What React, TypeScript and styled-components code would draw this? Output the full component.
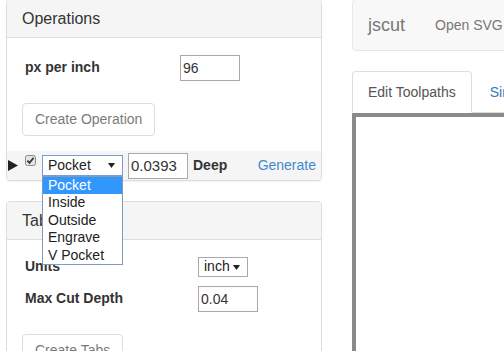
import styled, { createGlobalStyle } from 'styled-components'

const GlobalStyle = createGlobalStyle`
  html, body {
    margin: 0;
    padding: 0;
    background: #fff;
    overflow: hidden;
  }
  body {
    font-family: 'Liberation Sans', Arial, sans-serif;
    font-size: 14px;
    line-height: 1.42857;
    color: #333;
  }
  * {
    box-sizing: border-box;
  }
`

const OPERATION_TYPES = ['Pocket', 'Inside', 'Outside', 'Engrave', 'V Pocket']

export default function App() {
  return (
    <>
      <GlobalStyle />
      <Page>
        <LeftColumn>
          <Panel>
            <PanelHeading>Operations</PanelHeading>
            <PanelBody>
              <FieldRow $labelWidth={158} $offset={2}>
                <FieldLabel>px per inch</FieldLabel>
                <TextInput $width={60} defaultValue="96" />
              </FieldRow>
              <ActionRow>
                <Button disabled>Create Operation</Button>
              </ActionRow>
            </PanelBody>
            <OperationRow>
              <Expander width="10" height="11" viewBox="0 0 10 11">
                <path d="M0 0 L10 5.5 L0 11 Z" fill="#222" />
              </Expander>
              <CheckMark width="11" height="11" viewBox="0 0 11 11">
                <rect x="0.5" y="0.5" width="10" height="10" rx="2" fill="#e4e4e4" stroke="#8a8a8a" />
                <path d="M2.4 5.6 L4.5 7.9 L8.6 2.8" stroke="#333" strokeWidth="1.7" fill="none" />
              </CheckMark>
              <SelectWrap>
                <FakeSelect $width={81} $height={21} $focused>
                  <span>Pocket</span>
                  <SelectArrow />
                </FakeSelect>
                <OptionList>
                  {OPERATION_TYPES.map((name, i) => (
                    <OptionItem key={name} $selected={i === 0}>
                      {name}
                    </OptionItem>
                  ))}
                </OptionList>
              </SelectWrap>
              <TextInput $width={60} $fontSize={15} defaultValue="0.0393" />
              <DeepLabel>Deep</DeepLabel>
              <GenerateLink href="#">Generate</GenerateLink>
            </OperationRow>
          </Panel>

          <Panel>
            <PanelHeading>Tabs</PanelHeading>
            <PanelBody>
              <FieldRow $labelWidth={176} $offset={2}>
                <FieldLabel>Units</FieldLabel>
                <FakeSelect $width={50} $height={20}>
                  <span>inch</span>
                  <SelectArrow />
                </FakeSelect>
              </FieldRow>
              <FieldRow $labelWidth={176} $offset={9}>
                <FieldLabel>Max Cut Depth</FieldLabel>
                <TextInput $width={60} defaultValue="0.04" />
              </FieldRow>
              <ActionRow>
                <Button disabled>Create Tabs</Button>
              </ActionRow>
            </PanelBody>
          </Panel>
        </LeftColumn>

        <RightColumn>
          <Navbar>
            <Brand>jscut</Brand>
            <NavLink>Open SVG</NavLink>
            <NavLink>Save Gcode</NavLink>
          </Navbar>
          <TabList>
            <Tab $active>Edit Toolpaths</Tab>
            <Tab>Simulate GCODE</Tab>
          </TabList>
          <Canvas />
        </RightColumn>
      </Page>
    </>
  )
}

function SelectArrow() {
  return (
    <svg width="7" height="5" viewBox="0 0 7 5">
      <path d="M0 0 L7 0 L3.5 5 Z" fill="#222" />
    </svg>
  )
}

const Page = styled.div`
  display: flex;
  align-items: flex-start;
  gap: 30px;
  width: 504px;
  height: 352px;
  margin-top: -1px;
  padding-left: 6px;
  overflow: hidden;
`

const LeftColumn = styled.div`
  flex: none;
  width: 316px;
`

const RightColumn = styled.div`
  flex: none;
  width: 640px;
`

const Panel = styled.div`
  margin-bottom: 20px;
  background: #fff;
  border: 1px solid #ddd;
  border-radius: 4px;
  box-shadow: 0 1px 1px rgba(0, 0, 0, 0.05);
`

const PanelHeading = styled.div`
  padding: 10px 15px;
  background: #f5f5f5;
  border-bottom: 1px solid #ddd;
  border-radius: 3px 3px 0 0;
  font-size: 16px;
  line-height: 17px;
  color: #333;
`

const PanelBody = styled.div`
  padding: 15px;
`

const FieldRow = styled.div<{ $labelWidth: number; $offset: number }>`
  display: grid;
  grid-template-columns: ${p => p.$labelWidth}px auto;
  align-items: center;
  justify-items: start;
  margin-top: ${p => p.$offset}px;
`

const FieldLabel = styled.label`
  padding: 0 0 3px 3px;
  font-weight: bold;
  line-height: 16px;
`

const TextInput = styled.input<{ $width: number; $fontSize?: number }>`
  width: ${p => p.$width}px;
  height: 26px;
  padding: 1px 2px;
  border: 1px solid #a9a9a9;
  background: #fff;
  font-family: inherit;
  font-size: ${p => p.$fontSize ?? 14}px;
  color: #333;
  outline: none;
`

const ActionRow = styled.div`
  margin-top: 22px;
`

const Button = styled.button`
  display: inline-block;
  padding: 6px 12px;
  background: #fff;
  border: 1px solid #ccc;
  border-radius: 4px;
  font-family: inherit;
  font-size: 14px;
  line-height: 19px;
  color: #333;
  opacity: 0.65;
`

const OperationRow = styled.div`
  display: flex;
  align-items: center;
  height: 29px;
  padding: 0 5px 0 1px;
  background: #f5f5f5;
  border-radius: 0 0 3px 3px;
`

const Expander = styled.svg`
  flex: none;
  margin-right: 7px;
`

const CheckMark = styled.svg`
  flex: none;
  align-self: flex-start;
  margin: 4px 6px 0 0;
`

const SelectWrap = styled.div`
  position: relative;
  margin-right: 5px;
`

const FakeSelect = styled.div<{ $width: number; $height: number; $focused?: boolean }>`
  display: flex;
  align-items: center;
  justify-content: space-between;
  width: ${p => p.$width}px;
  height: ${p => p.$height}px;
  padding: 0 7px 0 5px;
  background: #fff;
  border: 1px solid ${p => (p.$focused ? '#7a9cd3' : '#a9a9a9')};
  font-size: 14px;
  color: #222;
`

const OptionList = styled.div`
  position: absolute;
  top: 100%;
  left: 0;
  z-index: 10;
  width: 100%;
  background: #fff;
  border: 1px solid #7f9db9;
`

const OptionItem = styled.div<{ $selected?: boolean }>`
  padding-left: 5px;
  font-size: 14px;
  line-height: 17.4px;
  background: ${p => (p.$selected ? '#3297fd' : '#fff')};
  color: ${p => (p.$selected ? '#fff' : '#222')};
`

const DeepLabel = styled.span`
  margin-left: 5px;
  font-weight: bold;
`

const GenerateLink = styled.a`
  margin-left: auto;
  color: #428bca;
  text-decoration: none;
`

const Navbar = styled.div`
  display: flex;
  align-items: center;
  min-height: 52px;
  background: #f8f8f8;
  border: 1px solid #e7e7e7;
  border-radius: 4px;
`

const Brand = styled.span`
  padding: 15px;
  font-size: 18px;
  line-height: 20px;
  color: #777;
`

const NavLink = styled.span`
  padding: 15px;
  line-height: 20px;
  color: #777;
`

const TabList = styled.div`
  display: flex;
  margin-top: 20px;
  border-bottom: 1px solid #ddd;
`

const Tab = styled.div<{ $active?: boolean }>`
  margin: 0 2px -1px 0;
  padding: 10px 15px;
  line-height: 20px;
  background: ${p => (p.$active ? '#fff' : 'transparent')};
  border: 1px solid ${p => (p.$active ? '#ddd' : 'transparent')};
  border-bottom-color: transparent;
  border-radius: 4px 4px 0 0;
  color: ${p => (p.$active ? '#555' : '#337ab7')};
  white-space: nowrap;
`

const Canvas = styled.div`
  height: 400px;
  background: #fff;
  border: 4px solid #8a8a8a;
`
